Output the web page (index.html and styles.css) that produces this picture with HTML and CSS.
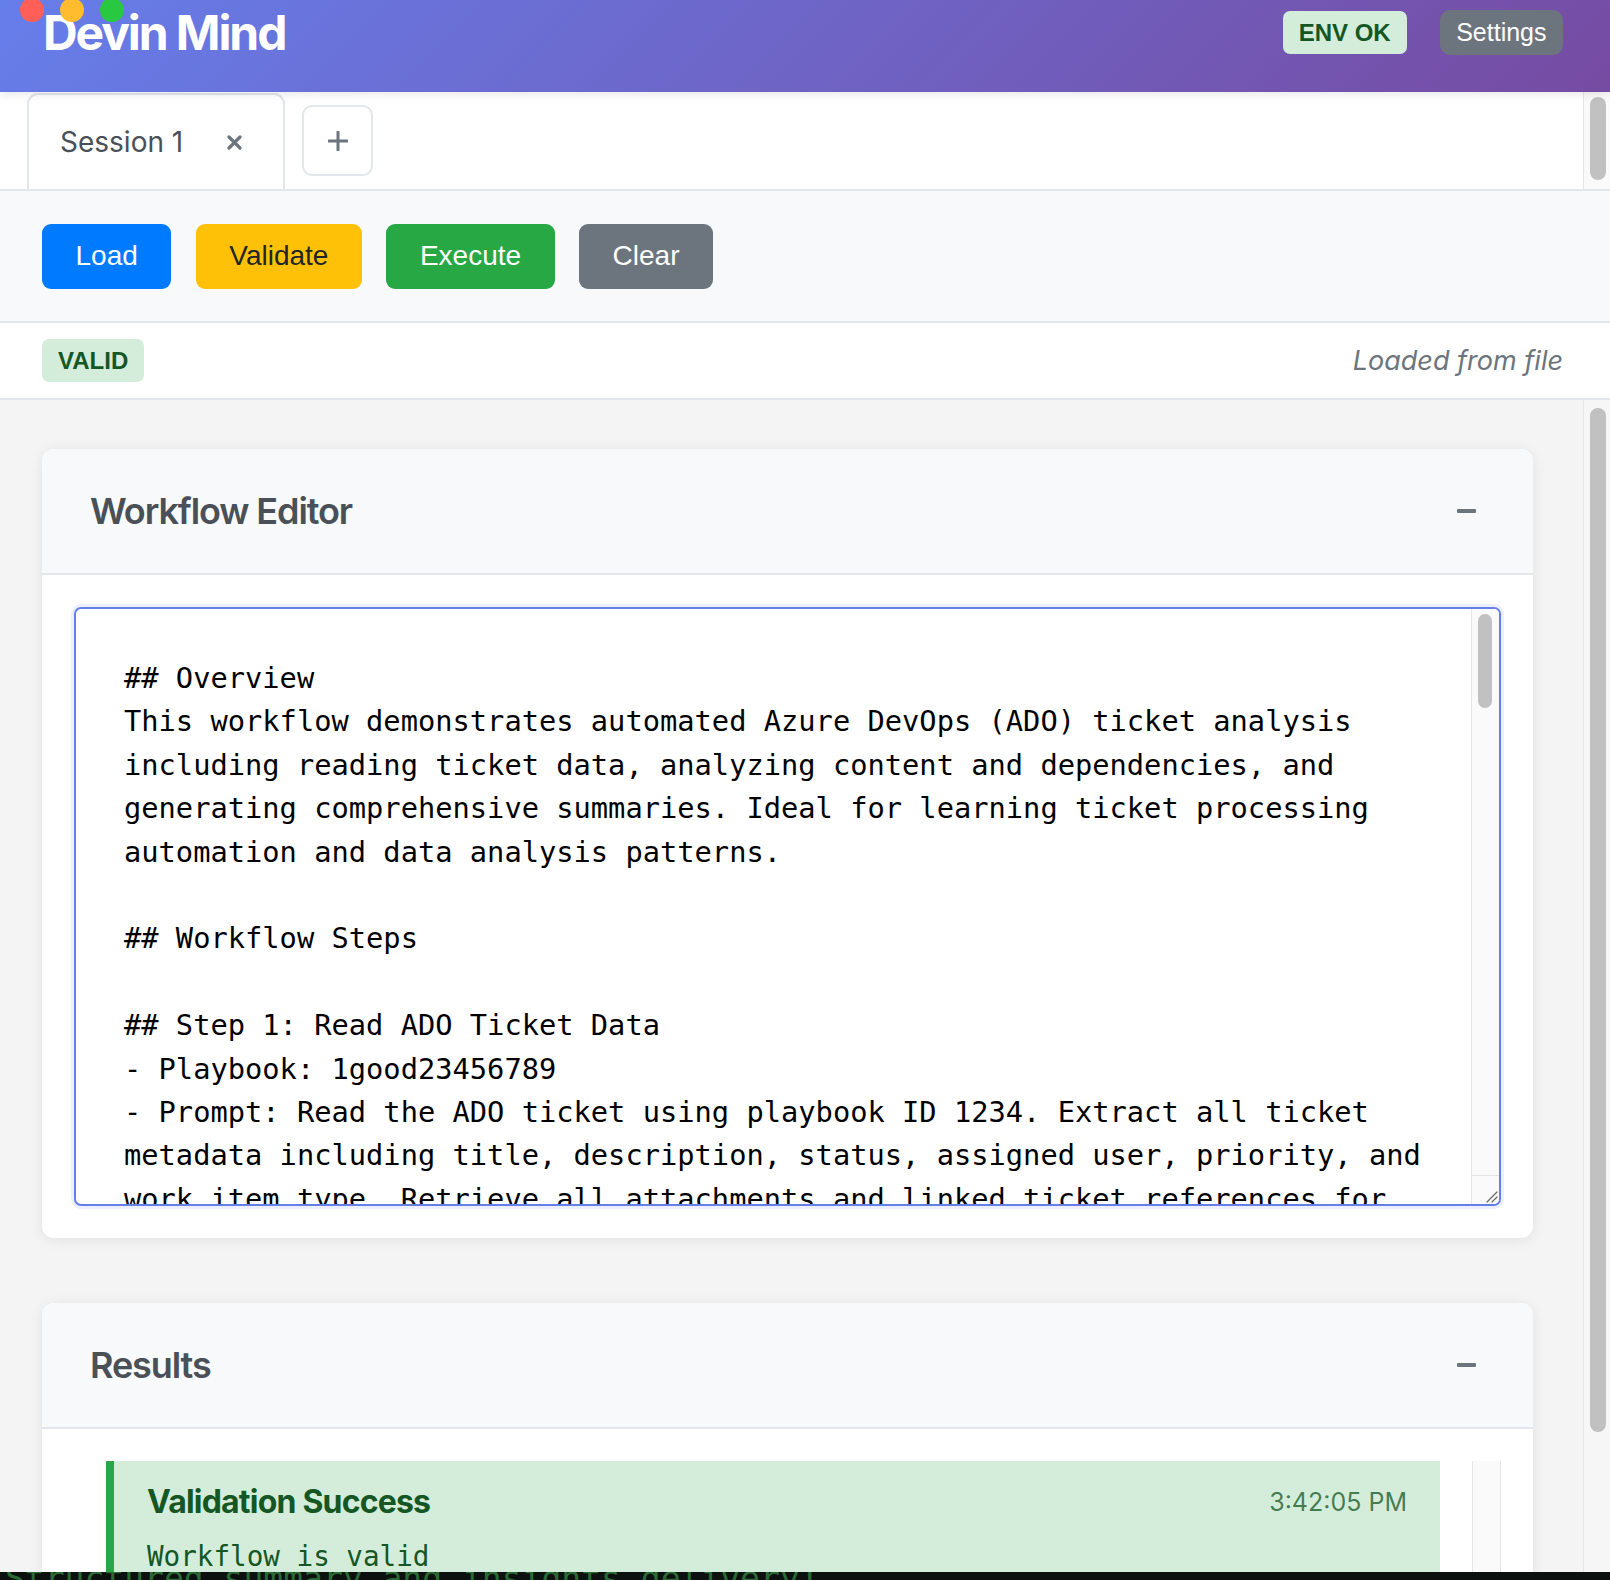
FILE: index.html
```html
<!DOCTYPE html>
<html lang="en">
<head>
<meta charset="utf-8">
<title>Devin Mind</title>
<link rel="stylesheet" href="styles.css">
</head>
<body>
<div class="app">
  <div class="window-controls">
    <span class="dot dot-red"></span>
    <span class="dot dot-yellow"></span>
    <span class="dot dot-green"></span>
  </div>

  <header class="topbar">
    <div class="topbar-row">
      <h1 class="brand">Devin Mind</h1>
      <div class="top-actions">
        <span class="badge">ENV OK</span>
        <button class="btn-settings">Settings</button>
      </div>
    </div>
  </header>

  <div class="tabstrip">
    <div class="tabs">
      <div class="tab">
        <span class="tab-label">Session 1</span>
        <svg class="tab-close" width="15" height="15" viewBox="0 0 15 15"><path d="M2 2 L13 13 M13 2 L2 13" stroke="#6c757d" stroke-width="3.2" stroke-linecap="round"/></svg>
      </div>
      <button class="tab-add" aria-label="New session">
        <svg width="20" height="20" viewBox="0 0 20 20"><path d="M10 1 V19 M1 10 H19" stroke="#6c757d" stroke-width="3" stroke-linecap="round"/></svg>
      </button>
    </div>
    <div class="vscroll vscroll-tabs"><div class="thumb"></div></div>
  </div>

  <div class="toolbar">
    <button class="btn btn-load">Load</button>
    <button class="btn btn-validate">Validate</button>
    <button class="btn btn-execute">Execute</button>
    <button class="btn btn-clear">Clear</button>
  </div>

  <div class="statusbar">
    <span class="badge">VALID</span>
    <span class="source">Loaded from file</span>
  </div>

  <div class="main">
    <div class="content">
      <section class="card">
        <div class="card-head">
          <h2 class="card-title">Workflow Editor</h2>
          <span class="collapse"></span>
        </div>
        <div class="card-body">
          <div class="editor-frame">
            <textarea class="editor" spellcheck="false">## Overview
This workflow demonstrates automated Azure DevOps (ADO) ticket analysis
including reading ticket data, analyzing content and dependencies, and
generating comprehensive summaries. Ideal for learning ticket processing
automation and data analysis patterns.

## Workflow Steps

## Step 1: Read ADO Ticket Data
- Playbook: 1good23456789
- Prompt: Read the ADO ticket using playbook ID 1234. Extract all ticket
metadata including title, description, status, assigned user, priority, and
work item type. Retrieve all attachments and linked ticket references for
comprehensive analysis.
- Expected Output: Complete ticket data object with metadata, attachments,
and linked references.

## Step 2: Analyze Ticket Content
- Playbook: 2analyze3456789
- Prompt: Analyze the ticket description and comments to identify the core
problem, affected components, and acceptance criteria. Classify the ticket
by category and estimate complexity based on the scope of requested work.
- Expected Output: Structured analysis with problem statement, affected
components, classification, and complexity estimate.

## Step 3: Map Dependencies
- Playbook: 3deps456789012
- Prompt: Review all linked tickets and identify blocking, blocked-by, and
related relationships. Build a dependency graph and flag any circular or
unresolved dependencies that could delay delivery.
- Expected Output: Dependency map with relationship types and risk flags.

## Step 4: Generate Summary
- Playbook: 4summary567890
- Prompt: Combine the ticket data, content analysis, and dependency map into
a comprehensive summary. Highlight key risks, open questions, and
recommended next actions for the assigned team.
- Expected Output: Markdown summary report ready for stakeholder review.

## Step 5: Deliver Insights
- Playbook: 5deliver678901
- Prompt: Post the generated summary as a comment on the original ticket and
notify the assigned user. Attach the dependency map as a supporting file.
- Expected Output: Summary and insights delivered to the ticket.

## Expected Results
- Complete extraction of ticket metadata and attachments
- Clear problem statement and acceptance criteria
- Dependency graph with identified risks
- Structured summary and insights delivery</textarea>
            <div class="editor-scroll">
              <div class="editor-track"><div class="editor-thumb"></div></div>
              <div class="editor-corner">
                <svg width="14" height="14" viewBox="0 0 14 14"><path d="M13 3 L3 13 M13 8 L8 13" stroke="#6b6b6b" stroke-width="1.3" stroke-linecap="round"/></svg>
              </div>
            </div>
          </div>
        </div>
      </section>

      <section class="card">
        <div class="card-head">
          <h2 class="card-title">Results</h2>
          <span class="collapse"></span>
        </div>
        <div class="card-body">
          <div class="results">
            <div class="results-items">
              <div class="result result-success">
                <div class="result-head">
                  <h3 class="result-title">Validation Success</h3>
                  <span class="result-time">3:42:05 PM</span>
                </div>
                <div class="result-msg">Workflow is valid</div>
              </div>
            </div>
            <div class="results-track"></div>
          </div>
        </div>
      </section>
    </div>
    <div class="vscroll vscroll-main"><div class="thumb"></div></div>
  </div>

  <div class="terminal-peek"><span>Structured summary and insights delivery!</span></div>
</div>
</body>
</html>
```

FILE: styles.css
```css
* { box-sizing: border-box; }

html, body {
  margin: 0;
  height: 100%;
}

body {
  font-family: Inter, "Noto Sans", sans-serif;
  background: #f4f4f4;
  overflow: hidden;
}

.app {
  position: relative;
  height: 100vh;
  display: flex;
  flex-direction: column;
  overflow: hidden;
}

/* window chrome dots overlaying header */
.window-controls {
  position: absolute;
  top: -2px;
  left: 20px;
  display: flex;
  gap: 16px;
  z-index: 10;
}
.dot {
  width: 24px;
  height: 24px;
  border-radius: 50%;
}
.dot-red { background: #ff5f57; }
.dot-yellow { background: #febc2e; }
.dot-green { background: #28c840; }

/* header */
.topbar {
  flex: 0 0 92px;
  padding: 10px 47px 0 43px;
  background: linear-gradient(135deg, #667eea 0%, #764ba2 100%);
  box-shadow: 0 2px 10px rgba(0, 0, 0, 0.1);
  position: relative;
  z-index: 2;
}
.topbar-row {
  height: 45px;
  display: flex;
  align-items: center;
  justify-content: space-between;
}
.brand {
  margin: 0;
  font-size: 48px;
  line-height: 1;
  font-weight: 700;
  color: #fff;
  letter-spacing: -2.1px;
}
.top-actions {
  display: flex;
  align-items: center;
  gap: 33px;
}
.badge {
  display: inline-flex;
  align-items: center;
  height: 43px;
  padding: 0 16px;
  border-radius: 7px;
  background: #d4edda;
  color: #155724;
  font: 700 24px "Liberation Sans", Arial, sans-serif;
}
.btn-settings {
  height: 45px;
  padding: 0 16.5px;
  border: 0;
  border-radius: 10px;
  background: #6c757d;
  color: #fff;
  font: 25px "Liberation Sans", Arial, sans-serif;
}

/* tabs */
.tabstrip {
  flex: 0 0 99px;
  display: flex;
  background: #fff;
  border-bottom: 2px solid #e3e6ea;
}
.tabs {
  flex: 1;
  display: flex;
  align-items: center;
  gap: 17px;
  padding-left: 27px;
}
.tab {
  align-self: stretch;
  margin-top: 1px;
  display: flex;
  align-items: center;
  gap: 44px;
  padding: 0 41px 0 31px;
  border: 2px solid #e3e6ea;
  border-bottom: 0;
  border-radius: 11px 11px 0 0;
  background: #fff;
  font-size: 28px;
  color: #495057;
}
.tab-close { display: block; }
.tab-add {
  width: 71px;
  height: 71px;
  display: flex;
  align-items: center;
  justify-content: center;
  border: 2px solid #e3e6ea;
  border-radius: 10px;
  background: #fff;
  padding: 0;
}

/* fake page scrollbars */
.vscroll {
  flex: 0 0 27px;
  border-left: 1px solid #e6e6e6;
  padding-left: 6px;
}
.vscroll .thumb {
  width: 16px;
  border-radius: 8px;
  background: #c1c1c1;
}
.vscroll-tabs { background: #fafafa; }
.vscroll-tabs .thumb { margin-top: 5px; height: 83px; }
.vscroll-main { background: #f6f6f6; }
.vscroll-main .thumb { margin-top: 8px; height: 1024px; }

/* toolbar */
.toolbar {
  flex: 0 0 132px;
  display: flex;
  align-items: center;
  gap: 24.5px;
  padding: 0 42px;
  background: #f8f9fa;
  border-bottom: 2px solid #e3e6ea;
}
.btn {
  height: 65px;
  padding: 0 33.5px;
  border: 0;
  border-radius: 9px;
  font: 28px "Liberation Sans", Arial, sans-serif;
  color: #fff;
}
.btn-load { background: #007bff; }
.btn-validate { background: #ffc107; color: #212529; }
.btn-execute { background: #28a745; }
.btn-clear { background: #6c757d; }

/* status bar */
.statusbar {
  flex: 0 0 77px;
  display: flex;
  align-items: center;
  justify-content: space-between;
  padding: 0 47px 0 42px;
  background: #fff;
  border-bottom: 2px solid #e3e6ea;
}
.source {
  font-size: 27px;
  font-style: italic;
  color: #6c757d;
}

/* main */
.main {
  flex: 1;
  min-height: 0;
  display: flex;
  background: #f4f4f4;
}
.content {
  flex: 1;
  min-width: 0;
  overflow: hidden;
  padding: 49px 50px 0 42px;
  display: flex;
  flex-direction: column;
  gap: 65px;
}
.card {
  flex-shrink: 0;
  background: #fff;
  border-radius: 12px;
  box-shadow: 0 2px 14px rgba(0, 0, 0, 0.08);
  overflow: hidden;
}
.card-head {
  height: 126px;
  display: flex;
  align-items: center;
  justify-content: space-between;
  padding: 0 57px 0 48px;
  background: #f8f9fa;
  border-bottom: 2px solid #e3e6ea;
}
.card-title {
  margin: 0;
  font-size: 36px;
  font-weight: 600;
  color: #495057;
  letter-spacing: -1.1px;
}
.collapse {
  width: 19px;
  height: 4px;
  border-radius: 1px;
  background: #6c757d;
}
.card-body {
  padding: 32px;
}

/* editor */
.editor-frame {
  display: flex;
  height: 599px;
  border: 2px solid #667eea;
  border-radius: 7px;
  box-shadow: 0 0 0 3px rgba(102, 126, 234, 0.12);
  background: #fff;
  overflow: hidden;
}
.editor {
  flex: 1;
  min-width: 0;
  display: block;
  margin: 0;
  padding: 48px;
  border: 0;
  outline: none;
  resize: none;
  overflow: hidden;
  font: 28.72px/43.4px "DejaVu Sans Mono", Menlo, monospace;
  color: #000;
  background: transparent;
}
.editor-scroll {
  flex: 0 0 28px;
  display: flex;
  flex-direction: column;
  background: #fafafa;
  border-left: 1px solid #e6e6e6;
}
.editor-track {
  flex: 1;
  padding: 5px 0 0 6px;
}
.editor-thumb {
  width: 14px;
  height: 94px;
  border-radius: 7px;
  background: #c1c1c1;
}
.editor-corner {
  flex: 0 0 29px;
  display: flex;
  align-items: flex-end;
  justify-content: flex-end;
  padding: 0 1px 1px 0;
  border-top: 1px solid #e6e6e6;
}
.editor-corner svg { display: block; }

/* results */
.results {
  display: flex;
  min-height: 400px;
}
.results-items {
  flex: 1;
  padding: 0 32px;
}
.results-track {
  flex: 0 0 29px;
  background: #fafafa;
  border-left: 1px solid #e5e5e5;
  border-right: 1px solid #e5e5e5;
}
.result {
  border-left: 8px solid #28a745;
  background: #d4edda;
  padding: 21px 33px 24px 33px;
}
.result-head {
  display: flex;
  align-items: center;
  justify-content: space-between;
}
.result-title {
  margin: 0;
  font-size: 32px;
  font-weight: 700;
  color: #155724;
  letter-spacing: -0.8px;
}
.result-time {
  font-size: 25px;
  color: rgba(21, 87, 36, 0.75);
}
.result-msg {
  margin-top: 19px;
  font: 27.6px "DejaVu Sans Mono", Menlo, monospace;
  color: #155724;
}

/* terminal panel peeking in at the bottom */
.terminal-peek {
  position: absolute;
  left: 0;
  right: 0;
  bottom: 0;
  height: 8px;
  overflow: hidden;
  background: #0c100f;
  z-index: 20;
}
.terminal-peek span {
  display: block;
  margin-top: -10px;
  padding-left: 5px;
  font: 33px/33px "DejaVu Sans Mono", Menlo, monospace;
  color: #2a6a34;
  white-space: nowrap;
}
```
